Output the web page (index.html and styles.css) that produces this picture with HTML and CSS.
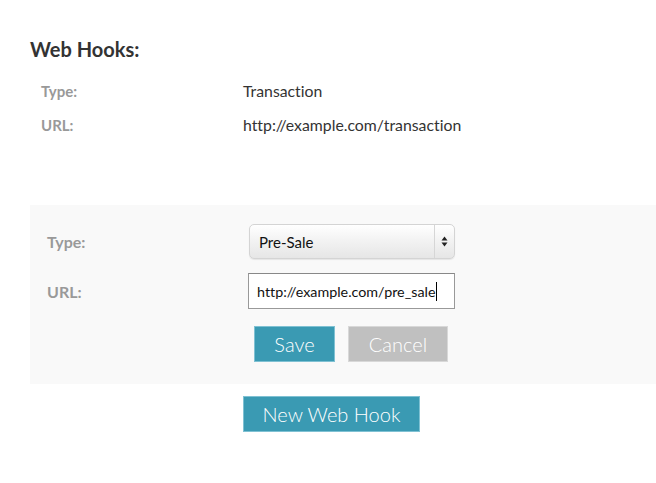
FILE: index.html
```html
<!DOCTYPE html>
<html>
<head>
<meta charset="utf-8">
<link rel="stylesheet" href="styles.css">
</head>
<body>
<div class="page">
  <h2 class="title">Web Hooks:</h2>
  <dl class="hook">
    <dt class="lbl">Type:</dt><dd class="val">Transaction</dd>
    <dt class="lbl">URL:</dt><dd class="val">http://example.com/transaction</dd>
  </dl>
  <div class="panel">
    <div class="form-row">
      <label class="flbl">Type:</label>
      <div class="select">
        <span class="select-text">Pre-Sale</span>
        <span class="select-arrows">
          <svg width="7" height="11" viewBox="0 0 7 11"><path d="M3.5 0.5 L6.5 4.5 L0.5 4.5 Z M3.5 10.5 L6.5 6.5 L0.5 6.5 Z" fill="#222"/></svg>
        </span>
      </div>
    </div>
    <div class="form-row">
      <label class="flbl">URL:</label>
      <div class="input"><span>http://example.com/pre_sale</span><span class="caret"></span></div>
    </div>
    <div class="btn-row">
      <button class="btn btn-primary save">Save</button>
      <button class="btn btn-muted cancel">Cancel</button>
    </div>
  </div>
  <div class="new-row">
    <button class="btn btn-primary newhook">New Web Hook</button>
  </div>
</div>
</body>
</html>
```
FILE: styles.css
```css
* { box-sizing: border-box; }
html, body { margin: 0; padding: 0; background: #fff; }
body {
  font-family: Lato, "Open Sans", sans-serif;
  color: #333;
  font-variant-ligatures: none;
  font-feature-settings: "liga" 0, "calt" 0;
}
.page { padding-left: 30px; }
.title {
  margin: 0;
  padding-top: 36px;
  font-size: 20px;
  line-height: 26px;
  font-weight: 700;
  color: #333;
}
.hook {
  margin: 12px 0 0 0;
  padding-left: 11px;
  display: grid;
  grid-template-columns: 202px 1fr;
  grid-auto-rows: 34px;
  line-height: 34px;
}
.hook dt, .hook dd { margin: 0; }
.lbl { font-weight: 700; color: #999; font-size: 15px; }
.val { color: #333; font-size: 15.8px; }
.panel {
  margin-top: 63px;
  background: #f9f9f9;
  padding: 19px 0 22px 17px;
}
.form-row {
  display: grid;
  grid-template-columns: 201px 207px;
  align-items: center;
}
.form-row + .form-row { margin-top: 14px; }
.flbl { font-weight: 700; color: #999; font-size: 16px; }
.select {
  margin-left: 1px;
  height: 35px;
  display: flex;
  align-items: stretch;
  border-radius: 5px;
  border: 1px solid #d4d4d4;
  background: linear-gradient(#ffffff, #f3f3f3 45%, #e6e6e6);
  box-shadow: 0 1px 1px rgba(0,0,0,0.08);
  font-size: 15px;
  color: #111;
}
.select-text { flex: 1; display: flex; align-items: center; padding-left: 9px; }
.select-arrows {
  width: 20px;
  border-left: 1px solid #d6d6d6;
  display: flex;
  align-items: center;
  justify-content: center;
}
.input {
  height: 36px;
  border: 1px solid #999;
  border-top-color: #888;
  background: #fff;
  display: flex;
  align-items: center;
  padding-left: 8px;
  font-size: 14.3px;
  color: #111;
}
.caret { display: inline-block; width: 1px; height: 19px; background: #000; margin-left: 1px; }
.btn-row {
  margin-top: 17px;
  padding-left: 207px;
  display: flex;
  gap: 13px;
}
.btn {
  height: 36px;
  border: 1px solid transparent;
  font-family: Lato, sans-serif;
  font-weight: 300;
  font-size: 20px;
  color: #fff;
  padding: 0;
  margin: 0;
}
.btn-primary { background: #3a9ab3; border-color: #7fc1d3; }
.btn-muted { background: #c0c0c0; border-color: #d8d8d8; }
.save { width: 81px; }
.cancel { width: 100px; }
.new-row { margin-top: 12px; padding-left: 213px; }
.newhook { width: 177px; }
```
